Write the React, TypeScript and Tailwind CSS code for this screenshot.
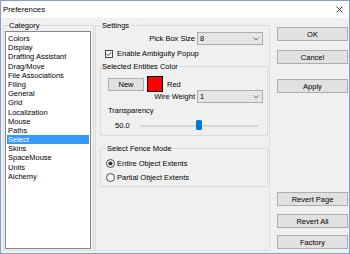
const CATEGORIES = [
  'Colors',
  'Display',
  'Drafting Assistant',
  'Drag/Move',
  'File Associations',
  'Filing',
  'General',
  'Grid',
  'Localization',
  'Mouse',
  'Paths',
  'Select',
  'Skins',
  'SpaceMouse',
  'Units',
  'Alchemy',
]

function Button({ label, className = '' }: { label: string; className?: string }) {
  return (
    <div
      className={`flex h-[14px] items-center justify-center border border-[#adadad] bg-[#e1e1e1] ${className}`}
    >
      {label}
    </div>
  )
}

function Combo({ value }: { value: string }) {
  return (
    <div className="flex h-[13px] w-[66px] items-center justify-between border border-[#acacac] bg-[#e5e5e5] pl-[2px] pr-[3px]">
      <span>{value}</span>
      <svg width="6" height="4" viewBox="0 0 6 4">
        <path d="M0.5 0.5 L3 3 L5.5 0.5" fill="none" stroke="#606060" strokeWidth="0.9" />
      </svg>
    </div>
  )
}

function Radio({ checked, label }: { checked?: boolean; label: string }) {
  return (
    <div className="flex h-[9px] items-center gap-[2px]">
      <svg width="9" height="9" viewBox="0 0 9 9">
        <circle cx="4.5" cy="4.5" r="4" fill="#fff" stroke="#333" strokeWidth="0.9" />
        {checked && <circle cx="4.5" cy="4.5" r="2.1" fill="#333" />}
      </svg>
      <span>{label}</span>
    </div>
  )
}

export default function App() {
  return (
    <div className="flex h-[254px] w-[350px] flex-col border border-[#7ea2d6] bg-[#f0f0f0] font-['Liberation_Sans',Arial,sans-serif] text-[7.5px] leading-[9px] text-black">
      {/* title bar */}
      <div className="flex h-[17px] items-center justify-between bg-white pl-[2px] pr-[6px]">
        <span className="text-[7.8px]">Preferences</span>
        <svg width="7" height="7" viewBox="0 0 7 7">
          <path d="M0.5 0.5 L6.5 6.5 M6.5 0.5 L0.5 6.5" stroke="#222" strokeWidth="0.9" />
        </svg>
      </div>

      <div className="flex flex-1 pb-[2px] pl-[2px] pr-px pt-[7px]">
        {/* category */}
        <div className="flex w-[91px] flex-col border border-[#dcdcdc]">
          <div className="-mt-[5px] ml-[4px] w-fit bg-[#f0f0f0] px-px">Category</div>
          <div className="mb-px ml-px mr-[2px] mt-px flex-1 border border-[#828790] bg-white px-px pt-[2px]">
            {CATEGORIES.map((c) => (
              <div
                key={c}
                className={`h-[9.2px] pl-px leading-[9.2px] ${c === 'Select' ? 'bg-[#3399ff] text-white' : ''}`}
              >
                {c}
              </div>
            ))}
          </div>
        </div>

        {/* settings */}
        <div className="ml-px flex w-[175px] flex-col border border-[#dcdcdc]">
          <div className="-mt-[5px] ml-[5px] w-fit bg-[#f0f0f0] px-px">Settings</div>

          <div className="mt-[2px] flex items-center justify-end gap-[2px] pr-[6px]">
            <span>Pick Box Size</span>
            <Combo value="8" />
          </div>

          <div className="ml-[9px] mt-[4px] flex h-[9px] items-center gap-[4px]">
            <svg width="8" height="8" viewBox="0 0 8 8">
              <rect x="0.5" y="0.5" width="7" height="7" fill="#fff" stroke="#333" strokeWidth="0.9" />
              <path d="M1.6 4 L3.2 5.6 L6.4 2.2" fill="none" stroke="#222" strokeWidth="0.9" />
            </svg>
            <span>Enable Ambiguity Popup</span>
          </div>

          <div className="ml-[4px] mr-px mt-[8px] flex flex-col border border-[#dcdcdc] pb-[4px]">
            <div className="-mt-[5px] w-fit bg-[#f0f0f0] px-px">Selected Entities Color</div>
            <div className="ml-[7px] mt-[5px] flex h-[16px] items-center">
              <div className="flex h-[13px] w-[36px] items-center justify-center border border-[#adadad] bg-[#e1e1e1]">
                New
              </div>
              <div className="ml-[3px] h-[16px] w-[16px] border border-black bg-[#ff0000]" />
              <span className="ml-[4px]">Red</span>
            </div>
            <div className="-mt-[2px] flex items-center justify-end gap-[2px] pr-[4px]">
              <span>Wire Weight</span>
              <Combo value="1" />
            </div>
            <div className="ml-[7px] mt-[3px]">Transparency</div>
            <div className="ml-[14px] mt-[5px] flex h-[11px] items-center">
              <span className="w-[25px]">50.0</span>
              <div className="relative flex h-[11px] w-[118px] items-center">
                <div className="h-[2px] w-full border-y border-[#d6d6d6] bg-[#e7eaea]" />
                <div className="absolute left-[56px] top-0 h-[10px] w-[6px] rounded-[1.5px] bg-[#007ad9]" />
              </div>
            </div>
          </div>

          <div className="ml-[4px] mr-px mt-[12px] flex flex-col border border-[#dcdcdc] pb-[4px]">
            <div className="-mt-[5px] ml-[5px] w-fit bg-[#f0f0f0] px-px">Select Fence Mode</div>
            <div className="ml-[5px] mt-[6px] flex flex-col gap-[5px]">
              <Radio checked label="Entire Object Extents" />
              <Radio label="Partial Object Extents" />
            </div>
          </div>
        </div>

        {/* buttons */}
        <div className="ml-[7px] flex w-[71px] flex-col pb-[2px]">
          <Button label="OK" className="mt-[2px]" />
          <Button label="Cancel" className="mt-[9px]" />
          <Button label="Apply" className="mt-[15px]" />
          <Button label="Revert Page" className="mt-auto" />
          <Button label="Revert All" className="mt-[8px]" />
          <Button label="Factory" className="mt-[7px]" />
        </div>
      </div>
    </div>
  )
}
